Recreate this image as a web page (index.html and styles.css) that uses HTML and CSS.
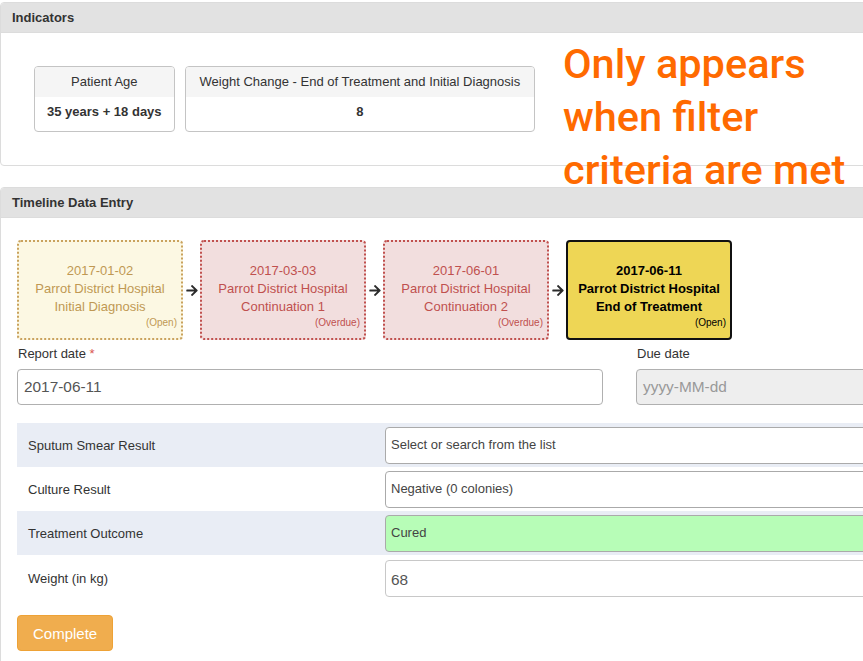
FILE: index.html
```html
<!DOCTYPE html>
<html>
<head>
<meta charset="utf-8">
<link rel="stylesheet" href="styles.css">
</head>
<body>
<div class="page">
  <div class="panel">
    <div class="panel-heading">Indicators</div>
    <div class="panel-body indicators">
      <div class="ind-card">
        <div class="ind-head">Patient Age</div>
        <div class="ind-value">35 years + 18 days</div>
      </div>
      <div class="ind-card wide">
        <div class="ind-head">Weight Change - End of Treatment and Initial Diagnosis</div>
        <div class="ind-value">8</div>
      </div>
    </div>
  </div>

  <div class="note">Only appears<br>when filter<br>criteria are met</div>

  <div class="panel">
    <div class="panel-heading">Timeline Data Entry</div>
    <div class="panel-body timeline-body">
      <div class="stages">
        <div class="stage stage-open">
          <div>2017-01-02</div>
          <div>Parrot District Hospital</div>
          <div>Initial Diagnosis</div>
          <div class="status">(Open)</div>
        </div>
        <svg class="arrow" viewBox="0 0 448 512"><path d="M190.5 66.9l22.2-22.2c9.4-9.4 24.6-9.4 33.9 0L441 239c9.4 9.4 9.4 24.6 0 33.9L246.6 467.3c-9.4 9.4-24.6 9.4-33.9 0l-22.2-22.2c-9.5-9.5-9.3-25 .4-34.3L311.4 296H24c-13.3 0-24-10.7-24-24v-32c0-13.3 10.7-24 24-24h287.4L190.9 101.2c-9.8-9.3-10-24.8-.4-34.3z"/></svg>
        <div class="stage stage-overdue">
          <div>2017-03-03</div>
          <div>Parrot District Hospital</div>
          <div>Continuation 1</div>
          <div class="status">(Overdue)</div>
        </div>
        <svg class="arrow" viewBox="0 0 448 512"><path d="M190.5 66.9l22.2-22.2c9.4-9.4 24.6-9.4 33.9 0L441 239c9.4 9.4 9.4 24.6 0 33.9L246.6 467.3c-9.4 9.4-24.6 9.4-33.9 0l-22.2-22.2c-9.5-9.5-9.3-25 .4-34.3L311.4 296H24c-13.3 0-24-10.7-24-24v-32c0-13.3 10.7-24 24-24h287.4L190.9 101.2c-9.8-9.3-10-24.8-.4-34.3z"/></svg>
        <div class="stage stage-overdue">
          <div>2017-06-01</div>
          <div>Parrot District Hospital</div>
          <div>Continuation 2</div>
          <div class="status">(Overdue)</div>
        </div>
        <svg class="arrow" viewBox="0 0 448 512"><path d="M190.5 66.9l22.2-22.2c9.4-9.4 24.6-9.4 33.9 0L441 239c9.4 9.4 9.4 24.6 0 33.9L246.6 467.3c-9.4 9.4-24.6 9.4-33.9 0l-22.2-22.2c-9.5-9.5-9.3-25 .4-34.3L311.4 296H24c-13.3 0-24-10.7-24-24v-32c0-13.3 10.7-24 24-24h287.4L190.9 101.2c-9.8-9.3-10-24.8-.4-34.3z"/></svg>
        <div class="stage stage-current">
          <div>2017-06-11</div>
          <div>Parrot District Hospital</div>
          <div>End of Treatment</div>
          <div class="status">(Open)</div>
        </div>
      </div>

      <div class="dates">
        <div class="field">
          <div class="label">Report date <span class="req">*</span></div>
          <div class="input">2017-06-11</div>
        </div>
        <div class="field">
          <div class="label">Due date</div>
          <div class="input disabled">yyyy-MM-dd</div>
        </div>
      </div>

      <div class="rows">
        <div class="row shaded">
          <div class="row-label">Sputum Smear Result</div>
          <div class="select">Select or search from the list</div>
        </div>
        <div class="row">
          <div class="row-label">Culture Result</div>
          <div class="select">Negative (0 colonies)</div>
        </div>
        <div class="row shaded">
          <div class="row-label">Treatment Outcome</div>
          <div class="select green">Cured</div>
        </div>
        <div class="row">
          <div class="row-label">Weight (in kg)</div>
          <div class="select num">68</div>
        </div>
      </div>

      <div class="btn">Complete</div>
    </div>
  </div>
</div>
</body>
</html>
```

FILE: styles.css
```css
html, body {
  margin: 0;
  padding: 0;
  background: #fff;
  overflow: hidden;
}
body {
  font-family: "Liberation Sans", Arial, sans-serif;
  color: #333;
  font-size: 13px;
}
.page {
  position: relative;
  padding-top: 2px;
  width: 900px;
}
.panel {
  border: 1px solid #dcdcdc;
  border-radius: 4px;
  background: #fff;
  margin-bottom: 21px;
}
.panel-heading {
  background: #e2e2e2;
  height: 29px;
  line-height: 29px;
  padding: 0 11px;
  font-weight: bold;
  font-size: 13px;
  color: #333;
  border-bottom: 1px solid #dcdcdc;
  border-radius: 3px 3px 0 0;
}
.indicators {
  display: flex;
  gap: 10px;
  padding: 33px 33px 33px;
}
.ind-card {
  border: 1px solid #c4c4c4;
  border-radius: 4px;
  overflow: hidden;
  text-align: center;
}
.ind-head {
  background: #f5f5f5;
  height: 30px;
  line-height: 30px;
  padding: 0 12px;
}
.ind-card.wide .ind-head {
  padding: 0 14px;
}
.ind-value {
  font-weight: bold;
  height: 34px;
  line-height: 30px;
  padding: 0 12px;
}
.note {
  position: absolute;
  left: 563px;
  top: 37px;
  font-family: Roboto, sans-serif;
  font-weight: 500;
  font-size: 41.5px;
  line-height: 53px;
  color: #ff6a00;
}
.timeline-body {
  padding: 22px 16px 40px;
}
.stages {
  display: flex;
  align-items: center;
}
.stage {
  width: 166px;
  height: 100px;
  box-sizing: border-box;
  border-radius: 4px;
  text-align: center;
  line-height: 18px;
  padding: 20px 4px 0;
  font-size: 13px;
}
.stage .status {
  font-size: 10px;
  text-align: right;
  line-height: 14px;
  margin-top: 0;
}
.stage-open {
  background: #fcf8e3;
  border: 2px dotted #c9a25e;
  color: #c09853;
}
.stage-overdue {
  background: #f2dede;
  border: 2px dotted #c0504e;
  color: #c0504e;
}
.stage-current {
  background: #eed655;
  border: 2px solid #111;
  color: #000;
  font-weight: bold;
}
.stage-current .status {
  font-weight: normal;
}
.arrow {
  width: 12px;
  height: 13px;
  margin: 0 2px 0 3px;
  fill: #2b2b2b;
  flex: none;
}
.dates {
  display: grid;
  grid-template-columns: 586px 1fr;
  gap: 33px;
  margin-top: 6px;
}
.label {
  font-size: 13px;
  line-height: 15px;
  padding-left: 1px;
  margin-bottom: 8px;
}
.req {
  color: #d9534f;
}
.input {
  height: 36px;
  box-sizing: border-box;
  border: 1px solid #b0b0b0;
  border-radius: 4px;
  padding: 0 6px;
  line-height: 34px;
  font-size: 15.4px;
  color: #555;
}
.input.disabled {
  background: #eee;
  color: #999;
}
.rows {
  margin-top: 18px;
}
.row {
  display: grid;
  grid-template-columns: 368px 1fr;
  height: 44px;
  align-items: center;
}
.row.shaded {
  background: #e9edf5;
}
.row-label {
  padding-left: 11px;
  font-size: 13px;
}
.select {
  height: 37px;
  box-sizing: border-box;
  border: 1px solid #aaa;
  border-radius: 4px;
  background: #fff;
  padding: 0 5px;
  line-height: 33px;
  font-size: 13px;
  color: #444;
}
.select.green {
  background: #b7fdb7;
}
.select.num {
  font-size: 15.4px;
  color: #555;
  border-color: #c8c8c8;
  line-height: 37px;
}
.row:last-child {
  height: 46px;
}
.btn {
  display: inline-block;
  margin-top: 14px;
  height: 36px;
  line-height: 36px;
  box-sizing: border-box;
  padding: 0 15px;
  background: #f0ad4e;
  border: 1px solid #eea236;
  border-radius: 4px;
  color: #fff;
  font-size: 15px;
}
```
